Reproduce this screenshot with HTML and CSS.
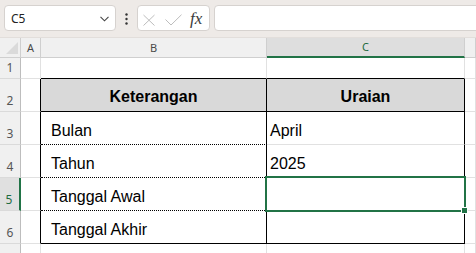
FILE: index.html
```html
<!DOCTYPE html>
<html>
<head>
<meta charset="utf-8">
<link rel="stylesheet" href="styles.css">
</head>
<body>
<div class="app">
  <div class="toolbar">
    <div class="namebox">
      <span class="ref">C5</span>
      <svg class="chev" width="9" height="6" viewBox="0 0 9 6"><polyline points="0.5,0.8 4.5,4.8 8.5,0.8" fill="none" stroke="#444" stroke-width="1.1"/></svg>
    </div>
    <div class="dots">
      <svg width="3" height="12" viewBox="0 0 3 12"><circle cx="1.5" cy="1.5" r="1.2" fill="#333"/><circle cx="1.5" cy="6" r="1.2" fill="#333"/><circle cx="1.5" cy="10.5" r="1.2" fill="#333"/></svg>
    </div>
    <div class="fxbox">
      <svg class="ic-x" width="12" height="24" viewBox="0 0 12 24"><path d="M0.5 9 L11.5 19.5 M11.5 9 L0.5 19.5" stroke="#bdbdbd" stroke-width="1" fill="none"/></svg>
      <svg class="ic-ok" width="17" height="24" viewBox="0 0 17 24"><polyline points="0.5,13.5 6,19 16.5,8.7" stroke="#bdbdbd" stroke-width="1" fill="none"/></svg>
      <span class="fx">fx</span>
    </div>
    <div class="formula"></div>
  </div>

  <div class="sheet">
    <div class="hd corner"><span class="tri"></span></div>
    <div class="hd col">A</div>
    <div class="hd col">B</div>
    <div class="hd col sel">C</div>
    <div class="hd col"></div>

    <div class="hd rn">1</div>
    <div class="c"></div>
    <div class="c tb-bottom"></div>
    <div class="c tb-bottom"></div>
    <div class="c"></div>

    <div class="hd rn">2</div>
    <div class="c tb-right"></div>
    <div class="c th tb-right tb-bottom">Keterangan</div>
    <div class="c th tb-right tb-bottom">Uraian</div>
    <div class="c"></div>

    <div class="hd rn">3</div>
    <div class="c tb-right"></div>
    <div class="c lbl tb-right dot-bottom">Bulan</div>
    <div class="c val tb-right">April</div>
    <div class="c"></div>

    <div class="hd rn">4</div>
    <div class="c tb-right"></div>
    <div class="c lbl tb-right dot-bottom">Tahun</div>
    <div class="c val tb-right">2025</div>
    <div class="c"></div>

    <div class="hd rn sel">5</div>
    <div class="c tb-right"></div>
    <div class="c lbl tb-right dot-bottom">Tanggal Awal</div>
    <div class="c val tb-right"></div>
    <div class="c"></div>

    <div class="hd rn">6</div>
    <div class="c tb-right"></div>
    <div class="c lbl tb-right tb-bottom">Tanggal Akhir</div>
    <div class="c val tb-right tb-bottom"></div>
    <div class="c"></div>

    <div class="hd rn">7</div>
    <div class="c"></div>
    <div class="c"></div>
    <div class="c"></div>
    <div class="c"></div>
  </div>

  <div class="selection"></div>
  <div class="handle"></div>
</div>
</body>
</html>
```

FILE: styles.css
```css
html, body {
  margin: 0;
  padding: 0;
}
body {
  width: 476px;
  height: 253px;
  overflow: hidden;
  background: #ffffff;
  font-family: "Liberation Sans", Arial, sans-serif;
}
.app {
  position: relative;
  width: 476px;
  height: 253px;
  overflow: hidden;
}

/* toolbar */
.toolbar {
  height: 38px;
  box-sizing: border-box;
  background: #eeeae7;
  display: flex;
  align-items: flex-start;
  padding: 5px 0 0 4px;
  border-bottom: 1px solid #e2dedb;
}
.namebox {
  width: 112px;
  height: 26px;
  box-sizing: border-box;
  background: #fff;
  border: 1px solid #d6d2cf;
  border-radius: 4px;
  display: flex;
  align-items: center;
  justify-content: space-between;
  padding: 0 6px 0 6px;
}
.ref {
  font-family: "Noto Sans", "Open Sans", sans-serif;
  font-size: 12px;
  color: #222;
  line-height: 24px;
  padding-top: 1px;
}
.chev {
  display: block;
  margin-top: 1px;
}
.dots {
  width: 21px;
  height: 26px;
  display: flex;
  align-items: center;
  justify-content: center;
}
.dots svg {
  display: block;
  margin-top: 1px;
}
.fxbox {
  width: 73px;
  height: 26px;
  box-sizing: border-box;
  background: #fff;
  border: 1px solid #d6d2cf;
  border-radius: 4px;
  display: flex;
  align-items: flex-start;
}
.fxbox svg {
  display: block;
}
.ic-x {
  margin-left: 5px;
}
.ic-ok {
  margin-left: 10px;
}
.fx {
  margin-left: 8px;
  font-family: "Liberation Serif", serif;
  font-style: italic;
  font-size: 17px;
  line-height: 24px;
  padding-top: 1px;
  color: #3a3a3a;
}
.formula {
  flex: 1;
  margin-left: 4px;
  margin-right: -8px;
  height: 26px;
  box-sizing: border-box;
  background: #fff;
  border: 1px solid #d6d2cf;
  border-radius: 4px;
}

/* sheet grid */
.sheet {
  display: grid;
  grid-template-columns: 21px 20px 226px 198px 1fr;
  grid-template-rows: 20px 21px 33px 33px 33px 33px 33px 33px 33px;
}
.sheet > div {
  box-sizing: border-box;
  border-right: 1px solid #e1e1e1;
  border-bottom: 1px solid #e1e1e1;
}
.hd {
  background: #f0f0f0;
  font-family: "Noto Sans", "Open Sans", sans-serif;
  color: #4a4a4a;
}
.sheet > .hd.col {
  border-right: 1px solid #cfcfcf;
  border-bottom: 1px solid #cfcfcf;
  font-size: 11px;
  line-height: 19px;
  text-align: center;
}
.sheet > .hd.col.sel {
  background: #dedede;
  color: #1d6b40;
  border-bottom: 2px solid #217346;
  line-height: 18px;
}
.sheet > .hd.corner {
  position: relative;
  border-right: 1px solid #cfcfcf;
  border-bottom: 1px solid #cfcfcf;
}
.tri {
  position: absolute;
  right: 2px;
  bottom: 3px;
  width: 12px;
  height: 12px;
  background: #dadada;
  clip-path: polygon(100% 0, 100% 100%, 0 100%);
}
.sheet > .hd.rn {
  border-right: 1px solid #bdbdbd;
  border-bottom: 1px solid #dadada;
  font-size: 12px;
  line-height: 14px;
  text-align: center;
  display: flex;
  align-items: flex-end;
  justify-content: center;
  padding-bottom: 3px;
  padding-left: 0;
  color: #555;
}
.sheet > .hd.rn.sel {
  background: #e0e0e0;
  color: #1d6b40;
  border-right: 2px solid #217346;
  padding-right: 1px;
}

.c {
  background: #fff;
  font-size: 16px;
  line-height: 20px;
  color: #000;
  display: flex;
  align-items: flex-end;
  padding-bottom: 3px;
  white-space: nowrap;
}
.sheet > .tb-right {
  border-right: 1px solid #000;
}
.sheet > .tb-bottom {
  border-bottom: 1px solid #000;
}
.sheet > .dot-bottom {
  border-bottom: 1px dotted #000;
}
.th {
  background: #d9d9d9;
  font-weight: bold;
  justify-content: center;
  padding-bottom: 4px;
}
.lbl {
  padding-left: 10px;
}
.val {
  padding-left: 3px;
}

/* selection overlay */
.selection {
  position: absolute;
  left: 265px;
  top: 176px;
  width: 201px;
  height: 36px;
  box-sizing: border-box;
  border: 2px solid #217346;
}
.handle {
  position: absolute;
  left: 461px;
  top: 207px;
  width: 7px;
  height: 7px;
  box-sizing: border-box;
  background: #217346;
  border: 1px solid #fff;
}
```
